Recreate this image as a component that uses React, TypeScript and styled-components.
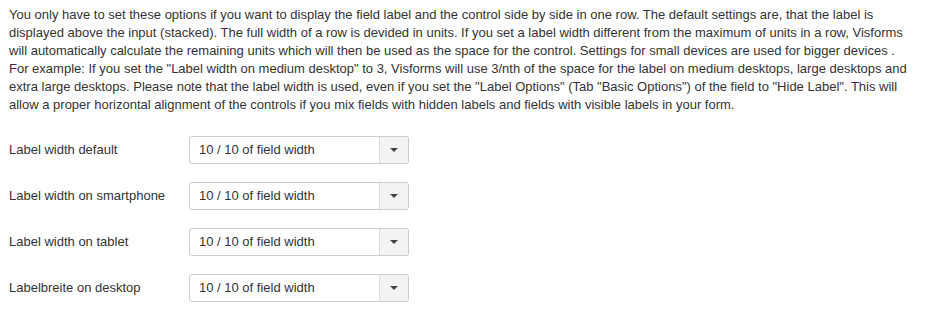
import styled, { createGlobalStyle } from 'styled-components';

const GlobalStyle = createGlobalStyle`
  body {
    margin: 0;
    background: #fff;
    font-family: 'Liberation Sans', Arial, sans-serif;
    color: #333;
  }
`;

const lines = [
  'You only have to set these options if you want to display the field label and the control side by side in one row. The default settings are, that the label is',
  'displayed above the input (stacked). The full width of a row is devided in units. If you set a label width different from the maximum of units in a row, Visforms',
  'will automatically calculate the remaining units which will then be used as the space for the control. Settings for small devices are used for bigger devices .',
  'For example: If you set the "Label width on medium desktop" to 3, Visforms will use 3/nth of the space for the label on medium desktops, large desktops and',
  'extra large desktops. Please note that the label width is used, even if you set the "Label Options" (Tab "Basic Options") of the field to "Hide Label". This will',
  'allow a proper horizontal alignment of the controls if you mix fields with hidden labels and fields with visible labels in your form.',
];

const rows = [
  'Label width default',
  'Label width on smartphone',
  'Label width on tablet',
  'Labelbreite on desktop',
];

const App = () => {
  return (
    <>
      <GlobalStyle />
      <Wrapper>
        <Intro>
          {lines.map((line, i) => (
            <Line key={i}>{line}</Line>
          ))}
        </Intro>
        <Form>
          {rows.map(label => (
            <Row key={label}>
              <Label>{label}</Label>
              <Select>
                <SelectValue>10 / 10 of field width</SelectValue>
                <Toggle>
                  <Caret />
                </Toggle>
              </Select>
            </Row>
          ))}
        </Form>
      </Wrapper>
    </>
  );
};

export default App;

const Wrapper = styled.div`
  padding: 6px 9px 0 9px;
  font-size: 13px;
`;

const Intro = styled.div`
  line-height: 18px;
`;

const Line = styled.div`
  white-space: nowrap;
`;

const Form = styled.div`
  display: flex;
  flex-direction: column;
  gap: 18px;
  margin-top: 22px;
`;

const Row = styled.div`
  display: flex;
  align-items: center;
  height: 28px;
`;

const Label = styled.div`
  width: 180px;
  flex-shrink: 0;
  margin-top: -2px;
`;

const Select = styled.div`
  display: flex;
  width: 220px;
  height: 28px;
  box-sizing: border-box;
  border: 1px solid #ccc;
  border-radius: 3px;
  background: #fff;
  overflow: hidden;
`;

const SelectValue = styled.div`
  flex: 1;
  display: flex;
  align-items: center;
  padding-left: 9px;
  margin-top: -1px;
`;

const Toggle = styled.div`
  width: 28px;
  display: flex;
  align-items: center;
  justify-content: center;
  border-left: 1px solid #ddd;
  background: #f3f3f3;
`;

const Caret = styled.span`
  width: 0;
  height: 0;
  border-left: 4px solid transparent;
  border-right: 4px solid transparent;
  border-top: 4px solid #444;
`;
